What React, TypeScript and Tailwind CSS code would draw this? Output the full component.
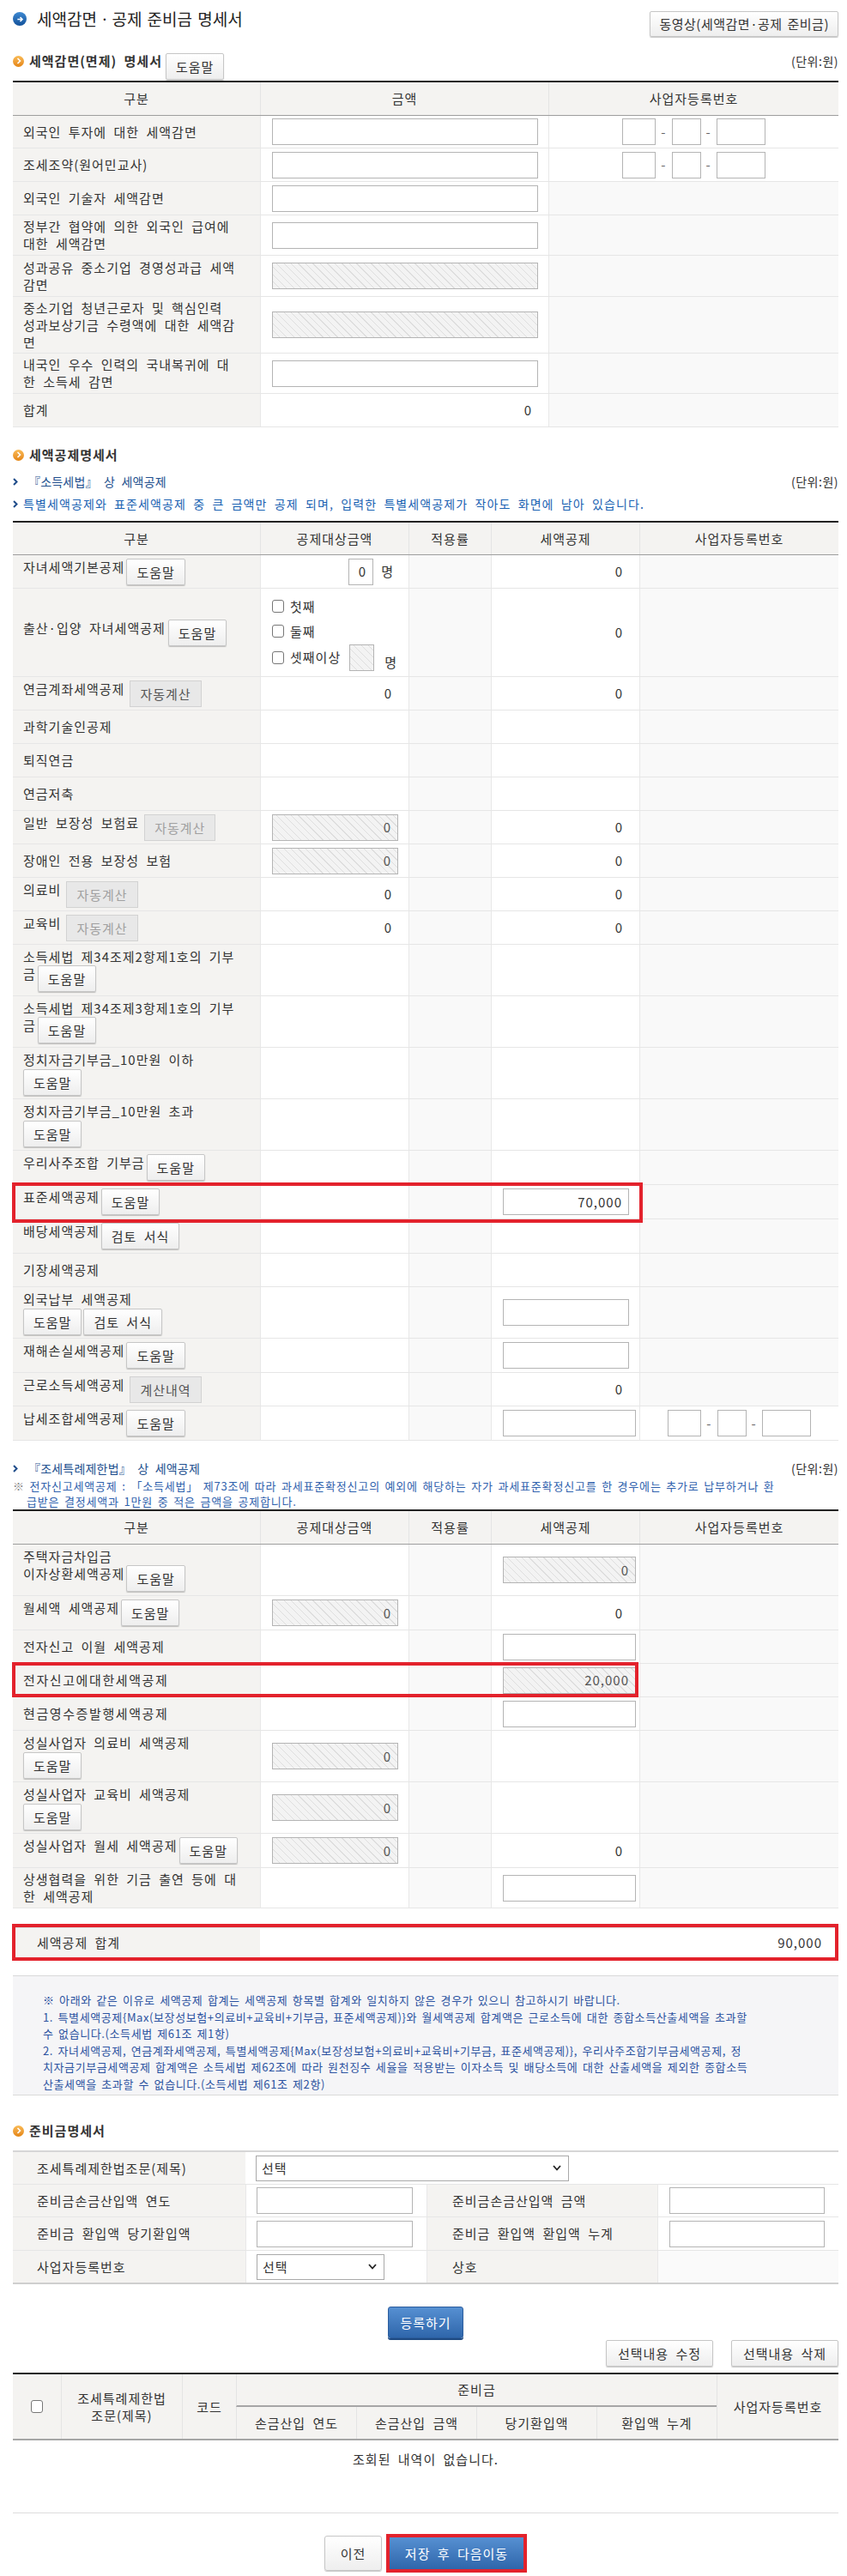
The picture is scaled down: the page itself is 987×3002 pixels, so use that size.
import React from "react"

type Kids = { children?: React.ReactNode; className?: string }

type RowDef = {
  h: string
  label: React.ReactNode
  c2?: React.ReactNode
  c4?: React.ReactNode
  c5?: React.ReactNode
  red?: string
}

const HelpBtn = ({ label = "도움말", className = "" }: { label?: string; className?: string }) => (
  <span className={"inline-flex h-[31px] shrink-0 items-center justify-center whitespace-nowrap rounded-[2px] border border-[#c6c6c6] bg-linear-to-b from-white to-[#eeeeee] px-[11px] leading-none text-[#333] shadow-[0_1px_1px_rgba(0,0,0,0.22)] " + className}>
    {label}
  </span>
)

const GrayBtn = ({ label, dim = false }: { label: string; dim?: boolean }) => (
  <span className={"ml-[6px] inline-flex h-[31px] shrink-0 items-center whitespace-nowrap border border-[#d2d2d2] bg-[#e8e8e8] px-[11px] leading-none " + (dim ? "text-[#a0a0a0]" : "text-[#555]")}>
    {label}
  </span>
)

const Box = ({ w, hatch = false, v = "" }: { w: string; hatch?: boolean; v?: string }) => (
  <span className={"flex h-[31px] shrink-0 items-center justify-end border border-[#b4b4b4] pr-[7px] " + w + " " + (hatch ? "bg-[repeating-linear-gradient(45deg,#f3f3f3_0px,#f3f3f3_5px,#dedede_5px,#dedede_6px)] text-[#555]" : "bg-white")}>
    {v}
  </span>
)

const Check = () => <span className="inline-block h-[15px] w-[14px] shrink-0 rounded-[3px] border border-[#777] bg-white" />

const Sel = ({ w }: { w: string }) => (
  <span className={"flex h-[30px] items-center justify-between border border-[#a9a9a9] bg-white pl-[6px] pr-[8px] " + w}>
    <span>선택</span>
    <svg width="10" height="7" viewBox="0 0 10 7">
      <path d="M1 1l4 4.5L9 1" stroke="#222" strokeWidth="1.8" fill="none" />
    </svg>
  </span>
)

const Biz = () => (
  <div className="flex w-full items-center justify-center gap-[6px] text-[#666]">
    <Box w="w-[39px]" />
    <span>-</span>
    <Box w="w-[34px]" />
    <span>-</span>
    <Box w="w-[57px]" />
  </div>
)

const Ln = ({ children, className = "" }: Kids) => (
  <div className={"flex items-start whitespace-nowrap leading-[20px] " + className}>{children}</div>
)

const V = ({ v = "0" }: { v?: string }) => <span className="ml-auto pr-[19px]">{v}</span>
const I = ({ children }: Kids) => <span className="pl-[13px]">{children}</span>

const BlueDot = () => (
  <span className="flex h-[16px] w-[16px] items-center justify-center rounded-full bg-linear-to-b from-[#3f8ad2] to-[#12519a]">
    <svg width="9" height="9" viewBox="0 0 10 10">
      <path d="M1.5 5h6.5M5 2.2L7.8 5 5 7.8" stroke="white" strokeWidth="1.7" fill="none" />
    </svg>
  </span>
)

const OrangeDot = () => (
  <span className="flex h-[13px] w-[13px] shrink-0 items-center justify-center rounded-full bg-linear-to-b from-[#f9bb55] to-[#e4850f]">
    <svg width="6" height="8" viewBox="0 0 6 8">
      <path d="M1.5 1l3 3-3 3" stroke="white" strokeWidth="1.6" fill="none" />
    </svg>
  </span>
)

const Arrow = () => (
  <svg width="6" height="9" viewBox="0 0 6 9" className="shrink-0">
    <path d="M1 1l3.5 3.5L1 8" stroke="#1f4c8a" strokeWidth="2" fill="none" />
  </svg>
)

const Heading = ({ children, className = "" }: Kids) => (
  <div className={"flex items-center gap-[6px] leading-[20px] " + className}>
    <OrangeDot />
    <span className="font-bold">{children}</span>
  </div>
)

const cols5 = "grid grid-cols-[288px_173px_96px_173px_232px]"

const Table5 = ({ rows, headH }: { rows: RowDef[]; headH: string }) => (
  <div className="border-t-2 border-[#222]">
    <div className={cols5 + " border-b border-[#9e9e9e] bg-[#f4f3f1] " + headH}>
      {["구분", "공제대상금액", "적용률", "세액공제", "사업자등록번호"].map((t, i) => (
        <div key={t} className={"flex items-center justify-center " + (i ? "border-l border-[#e4e4e4]" : "")}>
          {t}
        </div>
      ))}
    </div>
    {rows.map((r, i) => (
      <div key={i} className={"relative border-b border-[#e6e6e6] " + cols5 + " " + r.h}>
        <div className="flex flex-col justify-center bg-[#f4f3f1] pl-[12px]">{r.label}</div>
        <div className="flex items-center border-l border-[#e8e8e8] bg-white">{r.c2}</div>
        <div className="border-l border-[#e8e8e8] bg-[#f9f9f9]" />
        <div className="flex items-center border-l border-[#e8e8e8] bg-white">{r.c4}</div>
        <div className={"flex items-center border-l border-[#e8e8e8] " + (r.c5 ? "bg-white" : "bg-[#f9f9f9]")}>{r.c5}</div>
        {r.red && <div className={"pointer-events-none absolute left-[-1px] z-10 border-[4px] border-[#e3222c] " + r.red} />}
      </div>
    ))}
  </div>
)

const incomeRows: RowDef[] = [
  {
    h: "h-[39px]",
    label: <Ln>자녀세액기본공제<HelpBtn className="ml-[2px]" /></Ln>,
    c2: (
      <span className="ml-auto flex items-center gap-[9px] pr-[17px]">
        <Box w="w-[29px]" v="0" />명
      </span>
    ),
    c4: <V />,
  },
  {
    h: "h-[103px]",
    label: <Ln>출산·입양 자녀세액공제<HelpBtn className="ml-[3px]" /></Ln>,
    c2: (
      <div className="flex flex-col gap-[1px] pl-[13px]">
        <div className="flex h-[28px] items-center gap-[7px]"><Check />첫째</div>
        <div className="flex h-[28px] items-center gap-[7px]"><Check />둘째</div>
        <div className="flex h-[31px] items-center gap-[7px]">
          <Check />셋째이상
          <Box w="w-[29px] ml-[3px]" hatch />
          <span className="ml-[5px] self-end">명</span>
        </div>
      </div>
    ),
    c4: <V />,
  },
  { h: "h-[39px]", label: <Ln className="items-center">연금계좌세액공제<GrayBtn label="자동계산" /></Ln>, c2: <V />, c4: <V /> },
  { h: "h-[39px]", label: <Ln>과학기술인공제</Ln> },
  { h: "h-[39px]", label: <Ln>퇴직연금</Ln> },
  { h: "h-[39px]", label: <Ln>연금저축</Ln> },
  {
    h: "h-[39px]",
    label: <Ln className="items-center">일반 보장성 보험료<GrayBtn label="자동계산" dim /></Ln>,
    c2: <I><Box w="w-[147px]" hatch v="0" /></I>,
    c4: <V />,
  },
  { h: "h-[39px]", label: <Ln>장애인 전용 보장성 보험</Ln>, c2: <I><Box w="w-[147px]" hatch v="0" /></I>, c4: <V /> },
  { h: "h-[39px]", label: <Ln>의료비<GrayBtn label="자동계산" dim /></Ln>, c2: <V />, c4: <V /> },
  { h: "h-[39px]", label: <Ln>교육비<GrayBtn label="자동계산" dim /></Ln>, c2: <V />, c4: <V /> },
  {
    h: "h-[60px]",
    label: (
      <>
        <Ln>소득세법 제34조제2항제1호의 기부</Ln>
        <Ln>금<HelpBtn className="ml-[2px]" /></Ln>
      </>
    ),
  },
  {
    h: "h-[60px]",
    label: (
      <>
        <Ln>소득세법 제34조제3항제1호의 기부</Ln>
        <Ln>금<HelpBtn className="ml-[2px]" /></Ln>
      </>
    ),
  },
  {
    h: "h-[60px]",
    label: (
      <>
        <Ln>정치자금기부금_10만원 이하</Ln>
        <Ln className="mt-[1px]"><HelpBtn /></Ln>
      </>
    ),
  },
  {
    h: "h-[60px]",
    label: (
      <>
        <Ln>정치자금기부금_10만원 초과</Ln>
        <Ln className="mt-[1px]"><HelpBtn /></Ln>
      </>
    ),
  },
  { h: "h-[40px]", label: <Ln>우리사주조합 기부금<HelpBtn className="ml-[2px]" /></Ln> },
  {
    h: "h-[40px]",
    label: <Ln>표준세액공제<HelpBtn className="ml-[2px]" /></Ln>,
    c4: <I><Box w="w-[147px]" v="70,000" /></I>,
    red: "top-[-3px] bottom-[-5px] w-[735px]",
  },
  { h: "h-[40px]", label: <Ln>배당세액공제<HelpBtn label="검토 서식" className="ml-[2px]" /></Ln> },
  { h: "h-[39px]", label: <Ln>기장세액공제</Ln> },
  {
    h: "h-[60px]",
    label: (
      <>
        <Ln>외국납부 세액공제</Ln>
        <Ln className="mt-[1px]">
          <HelpBtn />
          <HelpBtn label="검토 서식" className="ml-[2px]" />
        </Ln>
      </>
    ),
    c4: <I><Box w="w-[147px]" /></I>,
  },
  { h: "h-[40px]", label: <Ln>재해손실세액공제<HelpBtn className="ml-[2px]" /></Ln>, c4: <I><Box w="w-[147px]" /></I> },
  { h: "h-[39px]", label: <Ln className="items-center">근로소득세액공제<GrayBtn label="계산내역" /></Ln>, c4: <V /> },
  {
    h: "h-[40px]",
    label: <Ln>납세조합세액공제<HelpBtn className="ml-[2px]" /></Ln>,
    c4: <I><Box w="w-[155px]" /></I>,
    c5: <Biz />,
  },
]

const specialRows: RowDef[] = [
  {
    h: "h-[60px]",
    label: (
      <>
        <Ln>주택자금차입금</Ln>
        <Ln>이자상환세액공제<HelpBtn className="ml-[2px]" /></Ln>
      </>
    ),
    c4: <I><Box w="w-[155px]" hatch v="0" /></I>,
  },
  {
    h: "h-[40px]",
    label: <Ln>월세액 세액공제<HelpBtn className="ml-[2px]" /></Ln>,
    c2: <I><Box w="w-[147px]" hatch v="0" /></I>,
    c4: <V />,
  },
  { h: "h-[39px]", label: <Ln>전자신고 이월 세액공제</Ln>, c4: <I><Box w="w-[155px]" /></I> },
  {
    h: "h-[39px]",
    label: <Ln className="tracking-[1.6px]">전자신고에대한세액공제</Ln>,
    c4: <I><Box w="w-[155px]" hatch v="20,000" /></I>,
    red: "top-[-2px] bottom-[-1px] w-[730px]",
  },
  { h: "h-[39px]", label: <Ln className="tracking-[1.6px]">현금영수증발행세액공제</Ln>, c4: <I><Box w="w-[155px]" /></I> },
  {
    h: "h-[60px]",
    label: (
      <>
        <Ln>성실사업자 의료비 세액공제</Ln>
        <Ln className="mt-[1px]"><HelpBtn /></Ln>
      </>
    ),
    c2: <I><Box w="w-[147px]" hatch v="0" /></I>,
  },
  {
    h: "h-[60px]",
    label: (
      <>
        <Ln>성실사업자 교육비 세액공제</Ln>
        <Ln className="mt-[1px]"><HelpBtn /></Ln>
      </>
    ),
    c2: <I><Box w="w-[147px]" hatch v="0" /></I>,
  },
  {
    h: "h-[40px]",
    label: <Ln>성실사업자 월세 세액공제<HelpBtn className="ml-[2px]" /></Ln>,
    c2: <I><Box w="w-[147px]" hatch v="0" /></I>,
    c4: <V />,
  },
  {
    h: "h-[47px]",
    label: (
      <>
        <Ln>상생협력을 위한 기금 출연 등에 대</Ln>
        <Ln>한 세액공제</Ln>
      </>
    ),
    c4: <I><Box w="w-[155px]" /></I>,
  },
]

const cols3 = "grid grid-cols-[288px_336px_338px]"

const reliefRows: { h: string; lines: string[]; hatch?: boolean; biz?: boolean; total?: boolean }[] = [
  { h: "h-[38px]", lines: ["외국인 투자에 대한 세액감면"], biz: true },
  { h: "h-[39px]", lines: ["조세조약(원어민교사)"], biz: true },
  { h: "h-[39px]", lines: ["외국인 기술자 세액감면"] },
  { h: "h-[47px]", lines: ["정부간 협약에 의한 외국인 급여에", "대한 세액감면"] },
  { h: "h-[48px]", lines: ["성과공유 중소기업 경영성과급 세액", "감면"], hatch: true },
  { h: "h-[66px]", lines: ["중소기업 청년근로자 및 핵심인력", "성과보상기금 수령액에 대한 세액감", "면"], hatch: true },
  { h: "h-[47px]", lines: ["내국인 우수 인력의 국내복귀에 대", "한 소득세 감면"] },
  { h: "h-[39px]", lines: ["합계"], total: true },
]

const cols4 = "grid grid-cols-[271px_211px_269px_211px]"
const listCols = "grid grid-cols-[56px_141px_63px_140px_140px_140px_140px_142px]"

export default function App() {
  return (
    <div className="w-[987px] bg-white pb-[4px] pl-[15px] pr-[10px] text-[15px] leading-[20px] tracking-[1px] text-[#333] [font-family:'Noto_Sans_CJK_KR','Noto_Sans',sans-serif] [word-spacing:4px]">
      {/* title */}
      <div className="flex items-start justify-between pt-[11px]">
        <div className="flex items-center gap-[12px]">
          <BlueDot />
          <h1 className="text-[19px] leading-[22px] tracking-[0px] text-[#222] [word-spacing:2px]">세액감면ㆍ공제 준비금 명세서</h1>
        </div>
        <span className="mt-[2px] flex h-[30px] items-center rounded-[2px] border border-[#c6c6c6] bg-linear-to-b from-white to-[#eeeeee] px-[10px] tracking-[0.5px] shadow-[0_1px_1px_rgba(0,0,0,0.22)] [word-spacing:2px]">
          동영상(세액감면·공제 준비금)
        </span>
      </div>

      {/* 세액감면 */}
      <div className="mt-[18px] flex items-start justify-between">
        <div className="flex items-start">
          <div className="flex items-center gap-[6px] leading-[20px]">
            <OrangeDot />
            <span className="font-bold">세액감면(면제) 명세서</span>
          </div>
          <HelpBtn className="ml-[4px] mt-[1px]" />
        </div>
        <span className="text-[14px] tracking-[0.5px]">(단위:원)</span>
      </div>

      <div className="mt-[1px] border-t-2 border-[#222]">
        <div className={cols3 + " h-[39px] border-b border-[#9e9e9e] bg-[#f4f3f1]"}>
          <div className="flex items-center justify-center">구분</div>
          <div className="flex items-center justify-center border-l border-[#e4e4e4]">금액</div>
          <div className="flex items-center justify-center border-l border-[#e4e4e4]">사업자등록번호</div>
        </div>
        {reliefRows.map((r) => (
          <div key={r.lines[0]} className={cols3 + " border-b border-[#e6e6e6] " + r.h}>
            <div className="flex flex-col justify-center bg-[#f4f3f1] pl-[12px]">
              {r.lines.map((l) => (
                <Ln key={l}>{l}</Ln>
              ))}
            </div>
            <div className="flex items-center border-l border-[#e8e8e8] bg-white">
              {r.total ? <V /> : <I><Box w="w-[310px]" hatch={r.hatch} /></I>}
            </div>
            <div className={"flex items-center border-l border-[#e8e8e8] " + (r.biz ? "bg-white" : "bg-[#f9f9f9]")}>
              {r.biz && <Biz />}
            </div>
          </div>
        ))}
      </div>

      {/* 세액공제명세서 */}
      <Heading className="mt-[22px]">세액공제명세서</Heading>
      <div className="mt-[11px] flex items-center justify-between leading-[20px]">
        <div className="flex items-center gap-[12px] text-[14px] tracking-[0.2px] text-[#23508e]">
          <Arrow />
          『소득세법』 상 세액공제
        </div>
        <span className="text-[14px] tracking-[0.5px]">(단위:원)</span>
      </div>
      <div className="mt-[6px] flex items-center gap-[6px] text-[14px] leading-[20px] tracking-[1.1px] text-[#1b62b2]">
        <Arrow />
        특별세액공제와 표준세액공제 중 큰 금액만 공제 되며, 입력한 특별세액공제가 작아도 화면에 남아 있습니다.
      </div>

      <div className="mt-[10px]">
        <Table5 rows={incomeRows} headH="h-[38px]" />
      </div>

      <div className="mt-[22px] flex items-center justify-between leading-[20px]">
        <div className="flex items-center gap-[12px] text-[14px] tracking-[0.2px] text-[#23508e]">
          <Arrow />
          『조세특례제한법』 상 세액공제
        </div>
        <span className="text-[14px] tracking-[0.5px]">(단위:원)</span>
      </div>
      <div className="mt-[2px] text-[13px] leading-[18px] tracking-[0.8px] text-[#2f61ad] [word-spacing:2px]">
        <div className="whitespace-nowrap">
          <span className="text-[#8a8a8a]">※</span> 전자신고세액공제 : 「소득세법」 제73조에 따라 과세표준확정신고의 예외에 해당하는 자가 과세표준확정신고를 한 경우에는 추가로 납부하거나 환
        </div>
        <div className="whitespace-nowrap pl-[16px]">급받은 결정세액과 1만원 중 적은 금액을 공제합니다.</div>
      </div>

      <Table5 rows={specialRows} headH="h-[39px]" />

      {/* 합계 */}
      <div className="relative mt-[22px]">
        <div className="grid h-[35px] grid-cols-[288px_674px] border-t border-[#dcdcdc]">
          <div className="flex items-center bg-[#f4f3f1] pl-[28px]">세액공제 합계</div>
          <div className="flex items-center bg-white">
            <V v="90,000" />
          </div>
        </div>
        <div className="pointer-events-none absolute bottom-[-4px] left-[-1px] right-0 top-[-4px] border-[4px] border-[#e3222c]" />
      </div>

      <div className="mt-[21px] border-y border-[#d9d9d9] bg-[#f5f5f7] pb-[3px] pl-[35px] pt-[18px] text-[13px] leading-[19.5px] tracking-[0.6px] text-[#2b52a0] [word-spacing:2px]">
        <div className="whitespace-nowrap">※ 아래와 같은 이유로 세액공제 합계는 세액공제 항목별 합계와 일치하지 않은 경우가 있으니 참고하시기 바랍니다.</div>
        <div className="whitespace-nowrap">1. 특별세액공제{"{"}Max(보장성보험+의료비+교육비+기부금, 표준세액공제){"}"}와 월세액공제 합계액은 근로소득에 대한 종합소득산출세액을 초과할</div>
        <div className="whitespace-nowrap">수 없습니다.(소득세법 제61조 제1항)</div>
        <div className="whitespace-nowrap">2. 자녀세액공제, 연금계좌세액공제, 특별세액공제{"{"}Max(보장성보험+의료비+교육비+기부금, 표준세액공제){"}"}, 우리사주조합기부금세액공제, 정</div>
        <div className="whitespace-nowrap">치자금기부금세액공제 합계액은 소득세법 제62조에 따라 원천징수 세율을 적용받는 이자소득 및 배당소득에 대한 산출세액을 제외한 종합소득</div>
        <div className="whitespace-nowrap">산출세액을 초과할 수 없습니다.(소득세법 제61조 제2항)</div>
      </div>

      {/* 준비금명세서 */}
      <Heading className="mt-[31px]">준비금명세서</Heading>
      <div className="mt-[13px] border-t-2 border-b-2 border-t-[#d6d6d6] border-b-[#cfcfcf]">
        <div className={cols4 + " h-[38px] border-b border-[#e6e6e6]"}>
          <div className="flex items-center bg-[#f4f3f1] pl-[28px]">조세특례제한법조문(제목)</div>
          <div className="col-span-3 flex items-center bg-white pl-[12px]">
            <Sel w="w-[365px]" />
          </div>
        </div>
        {[
          ["준비금손금산입액 연도", "준비금손금산입액 금액", "h-[38px]"],
          ["준비금 환입액 당기환입액", "준비금 환입액 환입액 누계", "h-[39px]"],
        ].map(([a, b, h]) => (
          <div key={a} className={cols4 + " border-b border-[#e6e6e6] " + h}>
            <div className="flex items-center bg-[#f4f3f1] pl-[28px]">{a}</div>
            <div className="flex items-center border-l border-[#e8e8e8] bg-white pl-[12px]">
              <Box w="w-[182px]" />
            </div>
            <div className="flex items-center border-l border-[#e8e8e8] bg-[#f4f3f1] pl-[29px]">{b}</div>
            <div className="flex items-center border-l border-[#e8e8e8] bg-white pl-[13px]">
              <Box w="w-[181px]" />
            </div>
          </div>
        ))}
        <div className={cols4 + " h-[37px]"}>
          <div className="flex items-center bg-[#f4f3f1] pl-[28px]">사업자등록번호</div>
          <div className="flex items-center border-l border-[#e8e8e8] bg-white pl-[12px]">
            <Sel w="w-[149px]" />
          </div>
          <div className="flex items-center border-l border-[#e8e8e8] bg-[#f4f3f1] pl-[29px]">상호</div>
          <div className="border-l border-[#e8e8e8] bg-[#fafafa]" />
        </div>
      </div>

      <div className="mt-[26px] flex justify-center">
        <span className="flex h-[37px] w-[88px] items-center justify-center rounded-[3px] border border-[#2c5d9d] bg-linear-to-b from-[#5690d2] to-[#2f66ab] text-white shadow-[0_2px_0_#1f4a82]">
          등록하기
        </span>
      </div>
      <div className="mt-[2px] flex justify-end gap-[21px]">
        <HelpBtn label="선택내용 수정" className="h-[30px] w-[125px] px-0" />
        <HelpBtn label="선택내용 삭제" className="h-[30px] w-[125px] px-0" />
      </div>

      <div className="mt-[7px] border-t-2 border-b-2 border-t-[#222] border-b-[#a6a6a6] bg-[#f4f3f1]">
        <div className={listCols + " grid-rows-[38px_37px] text-center"}>
          <div className="row-span-2 flex items-center justify-center">
            <Check />
          </div>
          <div className="row-span-2 flex flex-col items-center justify-center border-l border-[#e4e4e4]">
            <span>조세특례제한법</span>
            <span>조문(제목)</span>
          </div>
          <div className="row-span-2 flex items-center justify-center border-l border-[#e4e4e4]">코드</div>
          <div className="col-span-4 flex items-center justify-center border-b-2 border-l border-b-[#a6a6a6] border-l-[#e4e4e4]">준비금</div>
          <div className="row-span-2 flex items-center justify-center border-l border-[#e4e4e4]">사업자등록번호</div>
          <div className="flex items-center justify-center border-l border-[#e4e4e4]">손금산입 연도</div>
          <div className="flex items-center justify-center border-l border-[#e4e4e4]">손금산입 금액</div>
          <div className="flex items-center justify-center border-l border-[#e4e4e4]">당기환입액</div>
          <div className="flex items-center justify-center border-l border-[#e4e4e4]">환입액 누계</div>
        </div>
      </div>
      <div className="h-[85px] border-b border-[#dcdcdc] pt-[12px] text-center">조회된 내역이 없습니다.</div>

      <div className="mt-[24px] flex items-center justify-center gap-[5px]">
        <span className="flex h-[41px] w-[67px] items-center justify-center rounded-[3px] border border-[#c6c6c6] bg-linear-to-b from-white to-[#eeeeee] shadow-[0_1px_1px_rgba(0,0,0,0.22)]">
          이전
        </span>
        <span className="border-[4px] border-[#e3222c]">
          <span className="flex h-[37px] w-[156px] items-center justify-center bg-linear-to-b from-[#5690d2] to-[#2f66ab] text-white">
            저장 후 다음이동
          </span>
        </span>
      </div>
    </div>
  )
}
